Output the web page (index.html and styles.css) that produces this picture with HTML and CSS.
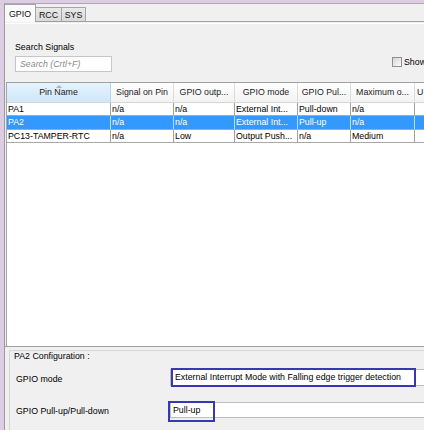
FILE: index.html
```html
<!DOCTYPE html>
<html>
<head>
<meta charset="utf-8">
<link rel="stylesheet" href="styles.css">
</head>
<body>
<div class="window">
  <div class="tabs">
    <div class="tab active">GPIO</div>
    <div class="tab t-rcc">RCC</div>
    <div class="tab t-sys">SYS</div>
  </div>
  <div class="panel">
    <div class="panel-inner">
      <div class="search-row">
        <div class="search-col">
          <div class="search-label">Search Signals</div>
          <div class="search-input">Search (Crtl+F)</div>
        </div>
        <div class="show"><span class="checkbox"></span><span>Show</span></div>
      </div>
      <div class="table">
        <div class="row head">
          <div class="cell sorted"><span class="arrow"></span>Pin Name</div>
          <div class="cell">Signal on Pin</div>
          <div class="cell">GPIO outp...</div>
          <div class="cell">GPIO mode</div>
          <div class="cell">GPIO Pul...</div>
          <div class="cell">Maximum o...</div>
          <div class="cell">U</div>
        </div>
        <div class="row">
          <div class="cell">PA1</div>
          <div class="cell">n/a</div>
          <div class="cell">n/a</div>
          <div class="cell">External Int...</div>
          <div class="cell">Pull-down</div>
          <div class="cell">n/a</div>
          <div class="cell"></div>
        </div>
        <div class="row selected">
          <div class="cell">PA2</div>
          <div class="cell">n/a</div>
          <div class="cell">n/a</div>
          <div class="cell">External Int...</div>
          <div class="cell">Pull-up</div>
          <div class="cell">n/a</div>
          <div class="cell"></div>
        </div>
        <div class="row">
          <div class="cell">PC13-TAMPER-RTC</div>
          <div class="cell">n/a</div>
          <div class="cell">Low</div>
          <div class="cell">Output Push...</div>
          <div class="cell">n/a</div>
          <div class="cell">Medium</div>
          <div class="cell"></div>
        </div>
      </div>
      <div class="config">
        <div class="group">
          <div class="group-title">PA2 Configuration :</div>
          <div class="frow r1">
            <div class="flabel">GPIO mode</div>
            <div class="field f1">External Interrupt Mode with Falling edge trigger detection<div class="mark m1"></div></div>
          </div>
          <div class="frow r2">
            <div class="flabel">GPIO Pull-up/Pull-down</div>
            <div class="field f2">Pull-up<div class="mark m2"></div></div>
          </div>
        </div>
      </div>
    </div>
  </div>
</div>
</body>
</html>
```
FILE: styles.css
```css
html, body {
  margin: 0;
  padding: 0;
  width: 424px;
  height: 430px;
  overflow: hidden;
}
body {
  background: #dccde4;
  font-family: "Liberation Sans", Arial, sans-serif;
  font-size: 8.8px;
  color: #000;
}
.window {
  margin: 3px 0 0 4px;
  border-left: 1px solid #9a9a9a;
  border-top: 1px solid #ababab;
  background: #f0f0f0;
  width: 419px;
  height: 426px;
  overflow: hidden;
}
.tabs {
  display: flex;
  align-items: flex-end;
  height: 17px;
}
.tab {
  box-sizing: border-box;
  height: 14px;
  border: 1px solid #a5a5a5;
  border-left: none;
  border-bottom: none;
  background: linear-gradient(#e9e9e9, #d9d9d9);
  display: flex;
  align-items: center;
  justify-content: center;
  color: #111;
}
.tab.active {
  position: relative;
  z-index: 1;
  height: 18px;
  margin-bottom: -1px;
  width: 31px;
  padding-top: 1px;
  padding-bottom: 1px;
  background: #fafafa;
}
.t-rcc { width: 26px; }
.t-sys { width: 24px; }
.panel {
  border-top: 1px solid #a0a0a0;
}
.panel-inner {
  margin-top: 1px;
  border-top: 1px solid #ffffff;
}
.search-row {
  display: flex;
  align-items: flex-end;
  padding: 18px 0 0 10px;
}
.search-col {
  flex: none;
}
.search-label {
  line-height: 10px;
  height: 10px;
  white-space: nowrap;
}
.search-input {
  margin-top: 4px;
  width: 97px;
  height: 16px;
  box-sizing: border-box;
  border: 1px solid #c6c6c6;
  background: #fff;
  color: #8a8a8a;
  font-style: italic;
  padding-left: 4px;
  line-height: 15px;
  white-space: nowrap;
}
.show {
  flex: none;
  margin-left: 280px;
  margin-bottom: 5px;
  display: flex;
  align-items: center;
  gap: 2px;
  white-space: nowrap;
}
.checkbox {
  display: block;
  width: 10px;
  height: 10px;
  box-sizing: border-box;
  border: 1px solid #8f8f8f;
  background: linear-gradient(135deg, #d6d6d6, #fbfbfb);
}
.table {
  margin-top: 10px;
  margin-left: 1px;
  border-top: 1px solid #a0a0a0;
  border-left: 1px solid #a5a5a5;
  background: #fff;
  height: 263px;
}
.row {
  display: grid;
  grid-template-columns: 104px 63px 61px 63px 53px 64px 60px;
}
.cell {
  box-sizing: border-box;
  height: 13.33px;
  line-height: 12.33px;
  border-right: 1px solid #a0a0a0;
  border-bottom: 1px solid #a8a8a8;
  padding-left: 1px;
  white-space: nowrap;
  overflow: hidden;
}
.head .cell {
  height: 20px;
  line-height: 19px;
  text-align: center;
  padding-left: 0;
  color: #222;
  background: linear-gradient(#ffffff, #f3f3f3);
  border-right: 1px solid #dddddd;
  border-bottom: 1px solid #d5d5d5;
}
.head .cell:last-child {
  text-align: left;
  padding-left: 2px;
}
.head .sorted {
  position: relative;
  background: linear-gradient(#e6f3fc, #cfe7f8);
  border-right: 1px solid #b3d6ee;
}
.arrow {
  position: absolute;
  top: 2px;
  left: 49px;
  width: 0;
  height: 0;
  border-left: 3px solid transparent;
  border-right: 3px solid transparent;
  border-bottom: 3px solid #a2b4c4;
}
.selected .cell {
  background: #3399ff;
  color: #fff;
  border-right-color: #b8d8ff;
}
.config {
  border-top: 1px solid #a0a0a0;
  padding: 3px 0 0 4px;
}
.group {
  border-top: 1px solid #d6d6d6;
  border-left: 1px solid #d6d6d6;
  height: 100px;
}
.group-title {
  padding-left: 4px;
  line-height: 10px;
  height: 10px;
  white-space: nowrap;
}
.frow {
  display: flex;
  align-items: center;
}
.r1 { margin-top: 8px; }
.r2 { margin-top: 16px; }
.flabel {
  flex: none;
  box-sizing: border-box;
  width: 160px;
  padding-left: 6px;
  padding-top: 2px;
  white-space: nowrap;
}
.field {
  flex: 1;
  position: relative;
  box-sizing: border-box;
  border: 1px solid #bdbdbd;
  border-right: none;
  background: #fff;
  white-space: nowrap;
}
.f1 {
  height: 17px;
  line-height: 15px;
  padding-left: 4px;
}
.f2 {
  height: 16px;
  line-height: 14px;
  padding-left: 2px;
}
.mark {
  position: absolute;
  box-sizing: border-box;
  border: 2px solid #3838b0;
}
.m1 {
  left: 0px;
  top: -2px;
  width: 245px;
  height: 19px;
}
.m2 {
  left: -3px;
  top: -2px;
  width: 47px;
  height: 21px;
}
```
